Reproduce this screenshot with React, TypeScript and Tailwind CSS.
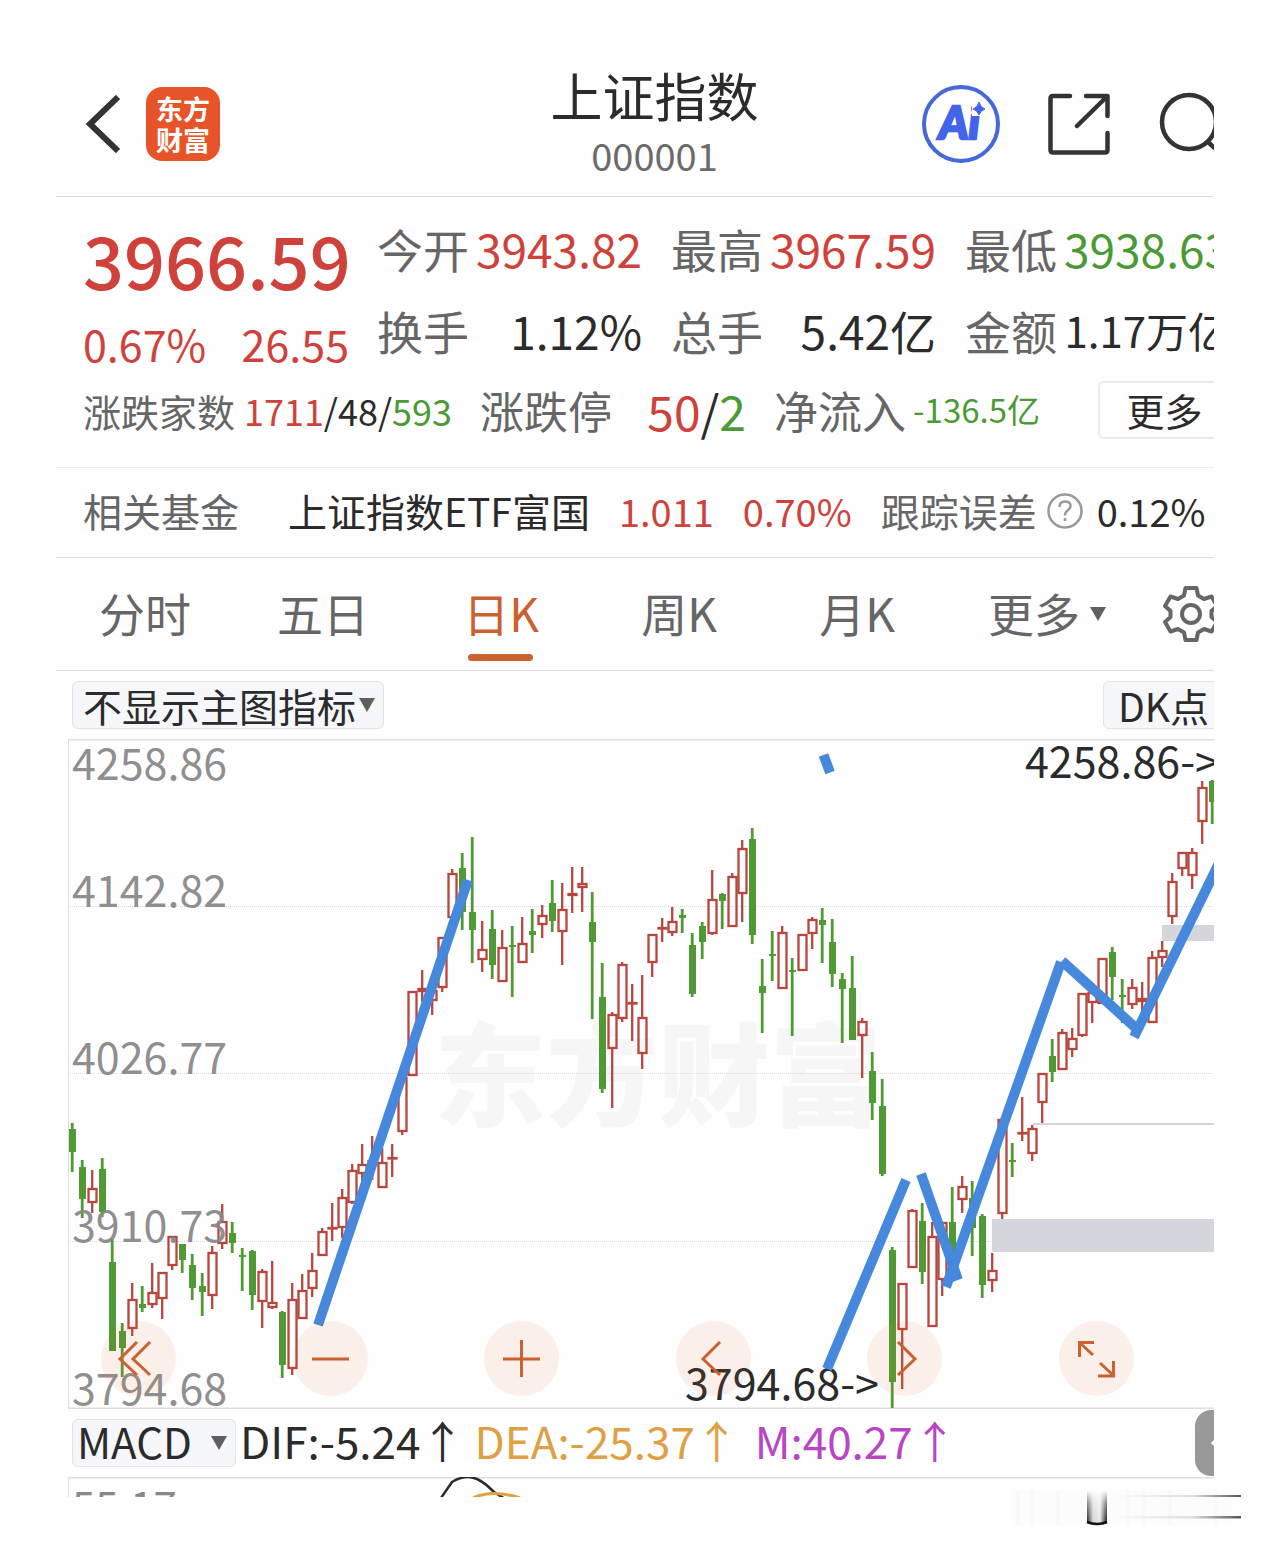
import type { ReactNode } from 'react'

// [high, body top, body bottom, low, rising]
type Candle = [number, number, number, number, 0 | 1]

const candles: Candle[] = [
    [1123, 1129, 1152, 1172, 0], [1160, 1167, 1199, 1218, 0], [1170, 1188, 1203, 1213, 1], [1158, 1169, 1212, 1217, 0],
    [1239, 1262, 1351, 1351, 0], [1323, 1331, 1348, 1377, 0], [1283, 1299, 1329, 1336, 1], [1286, 1304, 1308, 1312, 0],
    [1263, 1292, 1305, 1308, 1], [1272, 1272, 1299, 1319, 1], [1236, 1236, 1266, 1270, 1], [1244, 1244, 1260, 1273, 0],
    [1254, 1265, 1288, 1300, 0], [1273, 1286, 1292, 1316, 0], [1246, 1252, 1296, 1309, 1], [1204, 1221, 1244, 1249, 1],
    [1222, 1233, 1243, 1253, 0], [1248, 1255, 1257, 1291, 0], [1250, 1251, 1295, 1310, 0], [1269, 1271, 1302, 1328, 1],
    [1261, 1302, 1308, 1309, 1], [1311, 1312, 1365, 1378, 0], [1283, 1299, 1369, 1375, 1], [1274, 1290, 1319, 1319, 1],
    [1253, 1270, 1289, 1297, 1], [1228, 1231, 1256, 1256, 1], [1203, 1227, 1229, 1241, 1], [1189, 1197, 1228, 1238, 1],
    [1164, 1170, 1203, 1204, 1], [1144, 1164, 1174, 1190, 1], [1136, 1160, 1165, 1180, 1], [1148, 1162, 1188, 1188, 1],
    [1144, 1157, 1158, 1177, 1], [1077, 1077, 1132, 1135, 1], [991, 991, 1076, 1076, 1], [970, 988, 992, 1002, 1],
    [985, 990, 1001, 1015, 1], [937, 937, 988, 992, 1], [869, 873, 918, 918, 1], [853, 868, 912, 930, 0],
    [837, 912, 930, 963, 0], [921, 949, 960, 972, 1], [910, 929, 965, 979, 0], [930, 947, 982, 982, 1],
    [926, 945, 947, 997, 0], [917, 943, 963, 963, 1], [909, 931, 935, 953, 0], [905, 915, 925, 938, 1],
    [880, 903, 921, 932, 0], [883, 909, 932, 965, 1], [867, 893, 896, 913, 1], [867, 883, 888, 912, 1],
    [892, 922, 942, 1019, 0], [963, 997, 1089, 1093, 0], [1012, 1014, 1049, 1108, 1], [962, 964, 1019, 1022, 1],
    [984, 1002, 1004, 1041, 1], [975, 1017, 1054, 1069, 1], [934, 934, 963, 977, 1], [918, 927, 929, 942, 1],
    [907, 921, 933, 936, 1], [909, 915, 918, 933, 0], [933, 945, 994, 997, 0], [922, 926, 942, 959, 0],
    [870, 899, 934, 935, 1], [893, 894, 901, 929, 0], [873, 876, 927, 927, 1], [840, 848, 894, 922, 1],
    [828, 839, 935, 944, 0], [959, 986, 993, 1033, 0], [931, 954, 956, 981, 0], [926, 932, 989, 989, 1],
    [958, 970, 972, 1036, 0], [934, 934, 971, 971, 1], [917, 919, 934, 949, 1], [908, 920, 925, 963, 0],
    [919, 942, 974, 987, 0], [973, 979, 989, 1043, 0], [956, 988, 1040, 1040, 0], [1018, 1021, 1036, 1078, 1],
    [1052, 1071, 1103, 1120, 0], [1079, 1106, 1174, 1176, 0], [1247, 1250, 1382, 1408, 0], [1283, 1283, 1330, 1389, 1],
    [1209, 1210, 1268, 1268, 1], [1203, 1221, 1272, 1284, 0], [1222, 1236, 1327, 1327, 1], [1222, 1222, 1280, 1296, 1],
    [1187, 1222, 1257, 1262, 0], [1176, 1186, 1200, 1213, 1], [1181, 1198, 1228, 1256, 0], [1214, 1216, 1285, 1298, 0],
    [1253, 1270, 1281, 1292, 1], [1118, 1119, 1214, 1219, 1], [1143, 1160, 1161, 1177, 0], [1097, 1132, 1134, 1141, 1],
    [1125, 1128, 1154, 1161, 1], [1073, 1073, 1103, 1123, 1], [1039, 1056, 1072, 1082, 0], [1029, 1032, 1070, 1070, 1],
    [1028, 1038, 1050, 1057, 1], [993, 993, 1036, 1037, 1], [985, 992, 1003, 1023, 1], [958, 958, 1004, 1004, 1],
    [947, 952, 977, 1000, 0], [979, 995, 997, 1023, 0], [979, 987, 1005, 1009, 1], [982, 998, 1002, 1012, 1],
    [951, 957, 1023, 1023, 1], [941, 950, 958, 967, 1], [873, 881, 917, 924, 1], [852, 852, 869, 876, 1],
    [848, 852, 876, 889, 1], [781, 787, 822, 844, 1], [780, 781, 802, 824, 0],
]

const axis = [
    { label: '4258.86', y: 780 },
    { label: '4142.82', y: 907 },
    { label: '4026.77', y: 1074 },
    { label: '3910.73', y: 1242 },
    { label: '3794.68', y: 1405 },
]

const quotes = [
    { label: '今开', value: '3943.82', color: 'text-[#cf423c]' },
    { label: '最高', value: '3967.59', color: 'text-[#cf423c]' },
    { label: '最低', value: '3938.63', color: 'text-[#4b9a35]' },
    { label: '换手', value: '1.12%', color: 'text-[#2b2b2b]' },
    { label: '总手', value: '5.42亿', color: 'text-[#2b2b2b]' },
    { label: '金额', value: '1.17万亿', color: 'text-[#2b2b2b] text-[42px]' },
]

const CandleShape = ({ x, data }: { x: number; data: Candle }) => {
    const [high, top, bottom, low, rising] = data
    if (!rising) {
        return (
            <g fill="#4f9a35">
                <rect x={x - 1.2} y={high} width="2.8" height={low - high} />
                <rect x={x - 3} y={top} width="7" height={Math.max(bottom - top, 2)} />
            </g>
        )
    }
    return (
        <g stroke="#b8463f" strokeWidth="2.3" fill="none">
            <path d={`M${x + 0.2} ${high}V${top}M${x + 0.2} ${bottom}V${low}`} />
            <rect x={x - 3.5} y={top + 1} width="8" height={Math.max(bottom - top - 2, 0.5)} />
        </g>
    )
}

const Chart = () => {
    return (
        <svg viewBox="56 739 1200 670" className="block w-full h-auto" role="img" aria-label="上证指数 日K">
            <text x="434" y="1118" fontSize="112" fontWeight="900" fill="#f6f6f7">东方财富</text>
            <path d="M68 739.5H1256M68 1408.5H1256" stroke="#dedede" strokeWidth="2" />
            <path d="M68.5 739V1409" stroke="#dedede" />
            <path d="M68 906.5H1256M68 1073.5H1256M68 1241.5H1256" stroke="#dcdcdc" strokeDasharray="1 1" />
            <rect x="1162" y="925" width="94" height="16" fill="#d5d6dd" />
            <rect x="992" y="1219" width="264" height="33" fill="#d5d6dd" />
            <path d="M1033 1124H1256" stroke="#d5d6dd" strokeWidth="2" />
            {candles.map((c, i) => <CandleShape key={i} x={72 + i * 10} data={c} />)}
            <g fontSize="43" fill="#888" fillOpacity="0.95">
                {axis.map(a => <text key={a.label} x="72" y={a.y}>{a.label}</text>)}
            </g>
            <g fontSize="43" fill="#2b2b2b">
                <text x="1025" y="778">4258.86-&gt;</text>
                <text x="685" y="1400">3794.68-&gt;</text>
            </g>
            <g stroke="#4588dc" strokeWidth="10" fill="none">
                <path d="M318 1325L468 880" />
                <path d="M827 1369L906 1180" />
                <path d="M921 1174L958 1280" />
                <path d="M946 1287L1061 962" />
                <path d="M1062 961L1138 1030" />
                <path d="M1134 1037L1224 853" />
                <path d="M823.5 755L830 772.5" />
            </g>
        </svg>
    )
}

const RoundButton = ({ label, children }: { label: string; children: ReactNode }) => {
    return (
        <button type="button" aria-label={label} className="size-[75px] rounded-full bg-[#e0703a]/10">
            <svg viewBox="0 0 75 75" fill="none" stroke="#cb6030" strokeWidth="3" className="size-full">{children}</svg>
        </button>
    )
}

const Triangle = () => {
    return <svg viewBox="0 0 16 14" className="w-4 h-3.5 shrink-0 pointer-events-none" fill="#5f5f5f"><path d="M0 0H16L8 14Z" /></svg>
}

const Header = () => {
    return (
        <header className="h-[141px] border-b border-[#dcdcdc] grid grid-cols-[1fr_auto_1fr] items-center pl-[29px] pr-8 pb-1">
            <div className="flex items-center gap-[26px]">
                <button type="button" aria-label="返回">
                    <svg viewBox="0 0 35 58" className="w-[35px] h-[58px]" fill="none" stroke="#333" strokeWidth="6"><path d="M33 2L5 29L33 56" /></svg>
                </button>
                <div className="size-[74px] rounded-2xl bg-[#e8542a] text-white font-bold text-[27px] leading-[31px] flex items-center justify-center text-center">
                    <span>东方<br />财富</span>
                </div>
            </div>
            <div className="text-center">
                <h1 className="text-[52px] leading-[62px] text-[#2b2b2b]">上证指数</h1>
                <p className="text-[38px] leading-[58px] text-[#6b6b6b]">000001</p>
            </div>
            <div className="flex items-center justify-end gap-12">
                <button type="button" aria-label="Ai">
                    <svg viewBox="0 0 78 78" className="size-[78px]">
                        <circle cx="39" cy="39" r="37" fill="none" stroke="#4668d8" strokeWidth="4" />
                        <text x="17" y="54" fontSize="45" fontWeight="900" fontStyle="italic" fontFamily="Lato, sans-serif" fill="#4264ea" stroke="#4264ea" strokeWidth="2.5">Ai</text>
                        <path d="M50 17H64V31H50Z" fill="#fefefe" />
                        <path d="M57 17Q58.5 22.5 63 24Q58.5 25.5 57 30Q55.5 25.5 51 24Q55.5 22.5 57 17Z" fill="#4264ea" stroke="#4264ea" />
                    </svg>
                </button>
                <button type="button" aria-label="分享">
                    <svg viewBox="0 0 62 62" className="size-[62px]" fill="none" stroke="#333" strokeWidth="4.5" strokeLinecap="round" strokeLinejoin="round">
                        <path d="M22 3H5Q2.5 3 2.5 5.5V57Q2.5 59.5 5 59.5H57Q59.5 59.5 59.5 57V40M38 3H59.5V23M59 3.5L29 33" />
                    </svg>
                </button>
                <button type="button" aria-label="搜索">
                    <svg viewBox="0 0 66 66" className="size-[66px]" fill="none" stroke="#333" strokeWidth="4.5" strokeLinecap="round"><circle cx="31" cy="31" r="27" /><path d="M50 51L63 63" /></svg>
                </button>
            </div>
        </header>
    )
}

const Summary = () => {
    return (
        <section className="pt-2.5 pb-[18px] pl-[27px] border-b border-[#ececec]">
            <div className="flex items-start gap-7">
                <div className="w-[266px] shrink-0 pt-[11px] text-[#cf423c]">
                    <p className="text-[72px] leading-[82px] font-medium">3966.59</p>
                    <p className="flex justify-between text-[43px] leading-[86px]"><span>0.67%</span><span>26.55</span></p>
                </div>
                <dl className="grid grid-cols-[265px_265px_265px] gap-x-[29px] text-[46px] leading-[82px]">
                    {quotes.map(q => (
                        <div key={q.label} className="h-[82px] flex justify-between whitespace-nowrap">
                            <dt className="text-[#666]">{q.label}</dt>
                            <dd className={q.color}>{q.value}</dd>
                        </div>
                    ))}
                </dl>
            </div>
            <div className="-mt-[15px] h-[78px] flex items-center gap-7 whitespace-nowrap">
                <div className="w-[369px] flex justify-between items-center text-[38px] text-[#666]">
                    <span>涨跌家数</span>
                    <span className="text-[36px] text-[#2b2b2b]"><span className="text-[#cf423c]">1711</span>/48/<span className="text-[#4b9a35]">593</span></span>
                </div>
                <div className="w-[266px] flex justify-between items-center text-[44px] text-[#666]">
                    <span>涨跌停</span>
                    <span className="text-[48px] text-[#2b2b2b]"><span className="text-[#cf423c]">50</span>/<span className="text-[#4b9a35]">2</span></span>
                </div>
                <div className="w-[266px] flex justify-between items-center text-[44px] text-[#666]">
                    <span>净流入</span>
                    <span className="text-[33px] text-[#4b9a35]">-136.5亿</span>
                </div>
                <button type="button" className="ml-[30px] w-[133px] h-[58px] rounded-md border-2 border-[#ebebeb] text-[38px] leading-[50px] text-[#2b2b2b]">更多</button>
            </div>
        </section>
    )
}

const Fund = () => {
    return (
        <section className="h-[90px] pl-[27px] pb-1 flex items-center gap-[29px] border-b border-[#dcdcdc] text-[39px] text-[#2b2b2b] whitespace-nowrap">
            <span className="text-[#666] mr-5">相关基金</span>
            <a href="#etf">上证指数ETF富国</a>
            <span className="text-[38px] text-[#cf423c]">1.011</span>
            <span className="text-[38px] text-[#cf423c]">0.70%</span>
            <span className="flex items-center gap-2.5 text-[#666]">
                跟踪误差
                <svg viewBox="0 0 36 36" className="size-9" fill="none" stroke="#999" strokeWidth="2.5">
                    <circle cx="18" cy="18" r="16.5" />
                    <path d="M12.5 14Q12.5 8.5 18 8.5Q23.5 8.5 23.5 13Q23.5 15.5 20.5 17.5Q18 19.2 18 22.5M18 25V28" />
                </svg>
                <span className="ml-1 text-[38px] text-[#2b2b2b]">0.12%</span>
            </span>
        </section>
    )
}

const Tabs = () => {
    return (
        <nav className="h-[113px] flex items-center border-b border-[#dcdcdc] text-[46px] text-[#666] whitespace-nowrap">
            <button type="button" className="w-[178px] h-full pb-1 shrink-0">分时</button>
            <button type="button" className="w-[178px] h-full pb-1 shrink-0">五日</button>
            <button type="button" className="w-[178px] h-full pb-1 shrink-0 relative text-[#cb6030]">
                日K
                <span className="absolute bottom-[9px] left-14 w-[65px] h-[7px] rounded-full bg-[#cb6030]"></span>
            </button>
            <button type="button" className="w-[178px] h-full pb-1 shrink-0">周K</button>
            <button type="button" className="w-[178px] h-full pb-1 shrink-0">月K</button>
            <div className="w-[200px] pl-[42px] shrink-0 flex items-center">
                <select aria-label="更多周期" className="appearance-none bg-transparent w-[118px] pb-1 outline-none">
                    <option>更多</option>
                </select>
                <span className="-ml-4"><Triangle /></span>
            </div>
            <button type="button" aria-label="设置" className="ml-4 shrink-0">
                <svg viewBox="0 0 58 58" className="size-[58px]" fill="none" stroke="#666" strokeWidth="4" strokeLinejoin="round">
                    <path d="M23.5 3H34.5L36 10.5L42 14L49.5 11.5L55 21L49.5 26V32L55 37L49.5 46.5L42 44L36 47.5L34.5 55H23.5L22 47.5L16 44L8.5 46.5L3 37L8.5 32V26L3 21L8.5 11.5L16 14L22 10.5Z" />
                    <circle cx="29" cy="29" r="9" />
                </svg>
            </button>
        </nav>
    )
}

const Toolbar = () => {
    return (
        <div className="h-[68px] pl-4 pr-[13px] flex items-center justify-between text-[39px] text-[#2b2b2b] whitespace-nowrap">
            <div className="h-12 pl-2.5 pr-2 flex items-center gap-0.5 rounded-md border border-[#e0e3e8] bg-[#f5f7fa]">
                <select aria-label="主图指标" className="appearance-none bg-transparent outline-none leading-[56px] h-14 pb-1">
                    <option>不显示主图指标</option>
                </select>
                <Triangle />
            </div>
            <button type="button" className="h-12 w-[140px] pl-3.5 text-left leading-[42px] rounded-md border border-[#e0e3e8] bg-[#f5f7fa]">DK点</button>
        </div>
    )
}

const Macd = () => {
    return (
        <>
            <div className="h-[68px] pl-4 flex items-center text-[44px] leading-[60px] whitespace-nowrap">
                <div className="h-12 w-[164px] pl-1 pr-2 mr-1 flex items-center justify-between rounded-md border border-[#e0e3e8] bg-[#f5f7fa] text-[#2b2b2b]">
                    <select aria-label="副图指标" className="appearance-none bg-transparent outline-none text-[42px] leading-[60px] h-16 pb-1">
                        <option>MACD</option>
                    </select>
                    <Triangle />
                </div>
                <span className="mr-2.5 pb-1.5 text-[#2b2b2b]">DIF:-5.24↑</span>
                <span className="mr-4 pb-1.5 text-[#dfa045]">DEA:-25.37↑</span>
                <span className="pb-1.5 text-[#b845c4]">M:40.27↑</span>
                <button type="button" aria-label="展开" className="ml-auto w-[61px] h-[66px] rounded-2xl bg-[#999]">
                    <svg viewBox="0 0 61 66" className="size-full" fill="none" stroke="#fff" strokeWidth="3"><path d="M28 23L18 33L28 43" /></svg>
                </button>
            </div>
            <svg viewBox="56 1477 1200 20" className="block w-full h-auto overflow-hidden" role="img" aria-label="MACD">
                <path d="M68 1477.5H1256" stroke="#dedede" strokeWidth="2" />
                <path d="M68.5 1477V1497" stroke="#dedede" />
                <text x="72" y="1522" fontSize="42" fill="#888">55.17</text>
                <path d="M441 1498L452 1482Q465 1474 477 1479Q484 1482 494 1492L505 1499" fill="none" stroke="#2b2b2b" strokeWidth="2.5" />
                <path d="M473 1498Q492 1489 520 1498" fill="none" stroke="#dfa045" strokeWidth="3" />
            </svg>
        </>
    )
}

const Smudge = () => {
    return (
        <svg viewBox="0 0 232 38" className="w-[232px] h-[38px]" aria-hidden="true">
            <defs>
                <linearGradient id="fade" x1="0" y1="0" x2="0" y2="1">
                    <stop offset="0" stopColor="#fefefe" />
                    <stop offset="0.4" stopColor="#fefefe" stopOpacity="0.45" />
                    <stop offset="1" stopColor="#fefefe" stopOpacity="0" />
                </linearGradient>
                <linearGradient id="tube" x1="0" y1="0" x2="1" y2="0">
                    <stop offset="0" stopColor="#222" />
                    <stop offset="0.3" stopColor="#d5d5d5" />
                    <stop offset="0.65" stopColor="#e8e8e8" />
                    <stop offset="1" stopColor="#111" />
                </linearGradient>
                <linearGradient id="trail" x1="0" y1="0" x2="1" y2="0">
                    <stop offset="0" stopColor="#fafafa" />
                    <stop offset="0.6" stopColor="#ddd" />
                    <stop offset="1" stopColor="#555" />
                </linearGradient>
            </defs>
            <rect x="3" y="1" width="220" height="35" fill="#fcfcfc" />
            <path d="M8 2V36M22 2V36M48 2V36M118 2V36M134 2V36M160 2V36M206 2V36" stroke="#f8f8f8" strokeWidth="3" />
            <rect x="110" y="6" width="121" height="2" fill="url(#trail)" />
            <rect x="110" y="27" width="121" height="2.5" fill="url(#trail)" />
            <path d="M77 2H97V33Q97 36 87 36Q77 36 77 33Z" fill="url(#tube)" />
            <rect x="76" y="1" width="22" height="33" fill="url(#fade)" />
            <path d="M77 33Q87 37 97 33" fill="none" stroke="#111" strokeWidth="2.5" />
        </svg>
    )
}

const App = () => {
    return (
        <div className="bg-[#fefefe] min-h-screen px-14 pt-14 font-['Noto_Sans_CJK_SC',sans-serif]">
            <main className="overflow-hidden">
                <div className="w-[calc(100%+42px)]">
                    <Header />
                    <Summary />
                    <Fund />
                    <Tabs />
                    <Toolbar />
                    <div className="relative">
                        <Chart />
                        <div className="absolute inset-x-0 bottom-[13px] pl-[45px] pr-[122px] flex justify-between">
                            <RoundButton label="最早"><path d="M36 21L19 38L36 54M49 21L32 38L49 54" /></RoundButton>
                            <RoundButton label="缩小"><path d="M19 38H56" /></RoundButton>
                            <RoundButton label="放大"><path d="M19 38H56M37.5 19V56" /></RoundButton>
                            <RoundButton label="左移"><path d="M44 21L27 38L44 54" /></RoundButton>
                            <RoundButton label="右移"><path d="M31 21L48 38L31 54" /></RoundButton>
                            <RoundButton label="全屏"><path d="M20.5 36V21.5H35M21 22L34 34M54.5 40V55H39M54 54L41 42" /></RoundButton>
                        </div>
                    </div>
                    <Macd />
                </div>
            </main>
            <div className="-mt-2 -mr-7 flex justify-end">
                <Smudge />
            </div>
        </div>
    )
}

export default App
